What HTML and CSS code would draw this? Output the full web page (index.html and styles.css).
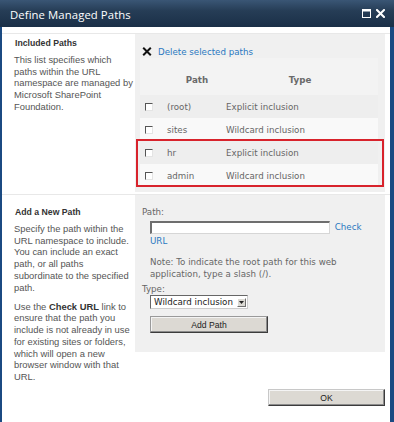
FILE: index.html
```html
<!DOCTYPE html>
<html>
<head>
<meta charset="utf-8">
<link rel="stylesheet" href="styles.css">
</head>
<body>
<div class="dialog">
  <div class="titlebar">
    <span class="title">Define Managed Paths</span>
    <span class="tb-icons">
      <svg class="tb-max" width="9" height="9" viewBox="0 0 9 9"><rect x="0.5" y="0.5" width="8" height="8" fill="none" stroke="#fff" stroke-width="1"/><rect x="0" y="0" width="9" height="2.5" fill="#fff"/></svg>
      <svg class="tb-close" width="9" height="9" viewBox="0 0 9 9"><path d="M1 1 L8 8 M8 1 L1 8" stroke="#fff" stroke-width="2" stroke-linecap="square"/></svg>
    </span>
  </div>
  <div class="body">
    <div class="section s1">
      <div class="left">
        <h3 class="heading">Included Paths</h3>
        <p class="desc">This list specifies which paths within the URL namespace are managed by Microsoft SharePoint Foundation.</p>
      </div>
      <div class="right">
        <div class="delete">
          <svg class="del-icon" width="10" height="9" viewBox="0 0 10 9"><path d="M1.2 0.8 L8.8 8.2 M8.8 0.8 L1.2 8.2" stroke="#111" stroke-width="2"/></svg>
          <a class="link">Delete selected paths</a>
        </div>
        <table class="paths">
          <thead>
            <tr><th class="c-chk"></th><th class="c-path">Path</th><th class="c-type">Type</th></tr>
          </thead>
          <tbody>
            <tr class="odd"><td class="c-chk"><span class="chk"></span></td><td>(root)</td><td>Explicit inclusion</td></tr>
            <tr class="even"><td class="c-chk"><span class="chk"></span></td><td>sites</td><td>Wildcard inclusion</td></tr>
            <tr class="odd"><td class="c-chk"><span class="chk"></span></td><td>hr</td><td>Explicit inclusion</td></tr>
            <tr class="even"><td class="c-chk"><span class="chk"></span></td><td>admin</td><td>Wildcard inclusion</td></tr>
          </tbody>
        </table>
        <div class="highlight"></div>
      </div>
    </div>
    <div class="section s2">
      <div class="left">
        <h3 class="heading">Add a New Path</h3>
        <p class="desc">Specify the path within the URL namespace to include. You can include an exact path, or all paths subordinate to the specified path.</p>
        <p class="desc">Use the <b>Check URL</b> link to ensure that the path you include is not already in use for existing sites or folders, which will open a new browser window with that URL.</p>
      </div>
      <div class="right">
        <div class="label">Path:</div>
        <div class="input-row"><span class="textbox"></span> <a class="link">Check URL</a></div>
        <div class="note">Note: To indicate the root path for this web application, type a slash (/).</div>
        <div class="label type-label">Type:</div>
        <div class="select-wrap"><span class="select"><span class="sel-text">Wildcard inclusion</span><span class="sel-btn"><svg width="5" height="3" viewBox="0 0 5 3"><path d="M0 0 H5 L2.5 3 Z" fill="#222"/></svg></span></span></div>
        <div class="btn-wrap"><span class="button add">Add Path</span></div>
      </div>
    </div>
    <div class="footer">
      <span class="button ok">OK</span>
    </div>
  </div>
</div>
</body>
</html>
```
FILE: styles.css
```css
html, body {
  margin: 0;
  padding: 0;
  background: #fff;
}
body {
  width: 394px;
  height: 422px;
  overflow: hidden;
}
.dialog {
  width: 394px;
  height: 422px;
  display: flex;
  flex-direction: column;
}
.titlebar {
  height: 27px;
  flex: none;
  box-sizing: border-box;
  background: linear-gradient(to bottom, #3a5675 0%, #263d56 40%, #1a2f47 100%);
  display: flex;
  align-items: center;
  justify-content: space-between;
  padding: 0 9px 0 10px;
}
.title {
  font-family: "Open Sans", "DejaVu Sans", sans-serif;
  font-size: 11.3px;
  color: #fff;
  letter-spacing: 0.1px;
  margin-top: 1px;
}
.tb-icons {
  display: flex;
  gap: 5px;
  align-items: center;
  margin-top: -1px;
}
.tb-icons svg { display: block; }
.body {
  flex: 1;
  border-left: 2px solid #1b4a82;
  border-right: 4px solid #1b4a82;
  padding-top: 6px;
}
.section {
  display: flex;
  align-items: flex-start;
  border-top: 1px solid #e8e8e8;
}
.s1 { height: 158px; }
.s2 {
  height: 157px;
  margin-top: 2px;
}
.left {
  width: 133px;
  flex: none;
  box-sizing: border-box;
  padding: 3px 0 0 12px;
}
.s2 .left {
  padding-top: 11px;
}
.right {
  width: 250px;
  flex: none;
  align-self: stretch;
  background: #f0f0f0;
  box-sizing: border-box;
  position: relative;
  font-family: "DejaVu Sans", Verdana, sans-serif;
  font-size: 8.7px;
  color: #666;
}
.heading {
  margin: 0;
  font-family: "Liberation Sans", Arial, sans-serif;
  font-size: 8.7px;
  font-weight: bold;
  line-height: 12px;
  color: #333;
  padding-left: 1px;
}
.desc {
  margin: 5px 0 0 0;
  width: 120px;
  font-family: "Liberation Sans", Arial, sans-serif;
  font-size: 9.4px;
  line-height: 11.7px;
  color: #555;
}
.desc + .desc {
  margin-top: 7.5px;
}
.desc b { color: #333; }
.link {
  color: #2a78c0;
}
.delete {
  padding: 12px 0 0 7px;
  height: 12px;
  line-height: 12px;
  display: flex;
  align-items: center;
  gap: 6px;
}
.del-icon { display: block; margin-top: -1px; }
.paths {
  margin-left: 5px;
  width: 238px;
  border-collapse: collapse;
  table-layout: fixed;
}
.paths th {
  height: 37px;
  box-sizing: border-box;
  padding: 16px 0 9px;
  line-height: 12px;
  font-weight: bold;
  color: #6a6a6a;
  text-align: center;
  background: #f3f3f3;
}
.paths .c-chk { width: 22px; }
.paths th.c-path { width: 60px; text-align: center; padding-left: 10px; box-sizing: border-box; }
.paths td {
  height: 23px;
  padding: 0;
  line-height: 12px;
  vertical-align: middle;
  white-space: nowrap;
}
.paths td:nth-child(2) { padding-left: 5px; }
.paths td:nth-child(3) { padding-left: 4px; }
.paths tr.odd td { background: #eeeeee; }
.paths tr.even td { background: #f9f9f9; }
.paths td.c-chk { padding-left: 5px; }
.chk {
  display: block;
  width: 8px;
  height: 8px;
  box-sizing: border-box;
  background: #fff;
  border-top: 1.5px solid #555;
  border-left: 1.5px solid #555;
  border-right: 1px solid #e4e4e4;
  border-bottom: 1px solid #e4e4e4;
  margin-top: 1px;
}
.highlight {
  position: absolute;
  left: 1px;
  top: 105px;
  width: 248px;
  height: 48px;
  box-sizing: border-box;
  border: 2px solid #d8232c;
}
.label {
  padding: 11px 0 0 7px;
  line-height: 12px;
}
.input-row {
  padding-left: 15px;
  padding-right: 10px;
  line-height: 14px;
  margin-top: 1.5px;
}
.textbox {
  display: inline-block;
  vertical-align: middle;
  width: 180px;
  height: 13px;
  box-sizing: border-box;
  background: #fff;
  border-top: 2px solid #6e6e6e;
  border-left: 2px solid #6e6e6e;
  border-right: 1px solid #d6d6d6;
  border-bottom: 1px solid #d6d6d6;
  margin-right: 2px;
}
.note {
  padding-left: 15px;
  padding-right: 20px;
  margin-top: 8.5px;
  line-height: 12px;
}
.type-label {
  padding-top: 3px;
}
.select-wrap {
  padding-left: 15px;
  margin-top: 0;
  height: 14px;
}
.select {
  display: inline-flex;
  align-items: center;
  justify-content: space-between;
  width: 98px;
  height: 14px;
  box-sizing: border-box;
  background: #fff;
  border-top: 1.5px solid #666;
  border-left: 1.5px solid #666;
  border-right: 1px solid #ccc;
  border-bottom: 1px solid #ccc;
  padding: 0 1px 0 3px;
  color: #222;
  line-height: 12px;
}
.sel-text { white-space: nowrap; }
.sel-btn {
  width: 9px;
  height: 9px;
  box-sizing: border-box;
  background: #dcdad4;
  border: 1px solid;
  border-color: #fff #707070 #707070 #fff;
  display: flex;
  align-items: center;
  justify-content: center;
}
.sel-btn svg { display: block; }
.btn-wrap {
  padding-left: 15px;
  margin-top: 7px;
}
.button {
  display: inline-flex;
  align-items: center;
  justify-content: center;
  box-sizing: border-box;
  background: #dcd9d3;
  border: 1px solid;
  border-color: #9a9a9a #3c3c3c #3c3c3c #9a9a9a;
  box-shadow: inset -1px -1px 0 #8c8c8c, inset 1px 1px 0 #f4f4f4;
  font-family: "Liberation Sans", Arial, sans-serif;
  font-size: 8.6px;
  color: #222;
}
.add {
  width: 118px;
  height: 17px;
}
.footer {
  display: flex;
  justify-content: flex-end;
  padding-right: 5px;
  margin-top: 37px;
}
.ok {
  width: 117px;
  height: 17px;
  border-color: #c8c8c8 #3c3c3c #3c3c3c #c8c8c8;
}
```
